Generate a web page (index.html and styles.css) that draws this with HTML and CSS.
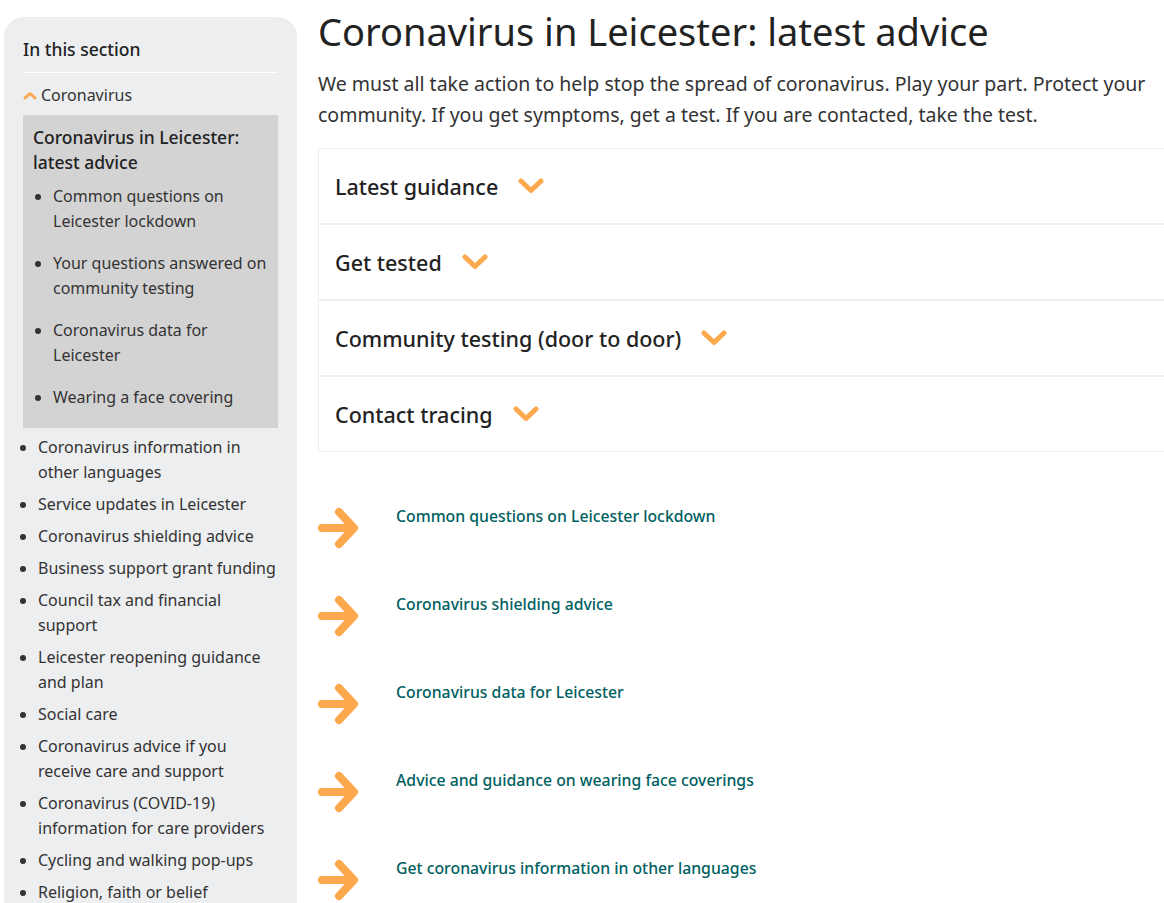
FILE: index.html
```html
<!DOCTYPE html>
<html lang="en">

<head>
    <meta charset="UTF-8">
    <meta name="viewport" content="width=device-width, initial-scale=1.0">
    <title>Coronavirus in Leicester: latest advice</title>
    <link rel="stylesheet" href="styles.css">
</head>

<body>
    <div class="page">
        <aside class="sidebar">
            <h2 class="side-title">In this section</h2>
            <a class="parent" href="#">
                <svg class="up" width="14" height="9" viewBox="0 0 14 9"><path d="M2 7 L7 2.5 L12 7" fill="none" stroke="#fca84c" stroke-width="3" stroke-linecap="round" stroke-linejoin="round"/></svg>
                Coronavirus
            </a>
            <div class="current">
                <h3>Coronavirus in Leicester: latest advice</h3>
                <ul class="sub">
                    <li><a href="#">Common questions on Leicester lockdown</a></li>
                    <li><a href="#">Your questions answered on community testing</a></li>
                    <li><a href="#">Coronavirus data for Leicester</a></li>
                    <li><a href="#">Wearing a face covering</a></li>
                </ul>
            </div>
            <ul class="side-list">
                <li><a href="#">Coronavirus information in other languages</a></li>
                <li><a href="#">Service updates in Leicester</a></li>
                <li><a href="#">Coronavirus shielding advice</a></li>
                <li><a href="#">Business support grant funding</a></li>
                <li><a href="#">Council tax and financial support</a></li>
                <li><a href="#">Leicester reopening guidance and plan</a></li>
                <li><a href="#">Social care</a></li>
                <li><a href="#">Coronavirus advice if you receive care and support</a></li>
                <li><a href="#">Coronavirus (COVID-19) information for care providers</a></li>
                <li><a href="#">Cycling and walking pop-ups</a></li>
                <li><a href="#">Religion, faith or belief</a></li>
            </ul>
        </aside>

        <main class="content">
            <h1>Coronavirus in Leicester: latest advice</h1>
            <p class="intro">We must all take action to help stop the spread of coronavirus. Play your part. Protect your community. If you get symptoms, get a test. If you are contacted, take the test.</p>

            <div class="accordion">
                <div class="acc-row">Latest guidance <span class="chev"></span></div>
                <div class="acc-row">Get tested <span class="chev"></span></div>
                <div class="acc-row">Community testing (door to door) <span class="chev"></span></div>
                <div class="acc-row">Contact tracing <span class="chev"></span></div>
            </div>

            <ul class="links">
                <li><span class="arrow"></span><a href="#">Common questions on Leicester lockdown</a></li>
                <li><span class="arrow"></span><a href="#">Coronavirus shielding advice</a></li>
                <li><span class="arrow"></span><a href="#">Coronavirus data for Leicester</a></li>
                <li><span class="arrow"></span><a href="#">Advice and guidance on wearing face coverings</a></li>
                <li><span class="arrow"></span><a href="#">Get coronavirus information in other languages</a></li>
            </ul>
        </main>
    </div>

    <script>
        // same chevron / arrow svg for every row
        var chev = '<svg width="26" height="16" viewBox="0 0 26 16"><path d="M3 3 L13 12.5 L23 3" fill="none" stroke="#fca84c" stroke-width="5" stroke-linecap="round" stroke-linejoin="round"/></svg>';
        var arrow = '<svg width="40" height="42" viewBox="0 0 40 42"><path d="M4 21 H34 M21 5 L36 21 L21 37" fill="none" stroke="#fca84c" stroke-width="8" stroke-linecap="round" stroke-linejoin="round"/></svg>';
        document.querySelectorAll('.chev').forEach(function (el) { el.innerHTML = chev; });
        document.querySelectorAll('.arrow').forEach(function (el) { el.innerHTML = arrow; });
    </script>
</body>

</html>
```

FILE: styles.css
```css
html {
    overflow: hidden;
}

body {
    font-family: "Noto Sans", "Open Sans", sans-serif;
    margin: 0;
    padding: 0;
    background-color: #fff;
    color: #222;
}

a {
    color: inherit;
    text-decoration: none;
}

.page {
    display: flex;
    align-items: flex-start;
    gap: 21px;
    padding: 17px 0 0 4px;
    width: 1300px;
}

/* sidebar */

.sidebar {
    width: 255px;
    flex: none;
    background-color: #edeef0;
    border-radius: 20px 20px 0 0;
    padding: 20px 19px 40px 19px;
}

.side-title {
    font-size: 17.5px;
    font-weight: 500;
    margin: 0;
    padding-bottom: 10px;
    line-height: 25px;
    border-bottom: 1px solid #fff;
}

.parent {
    display: flex;
    align-items: center;
    gap: 4px;
    font-size: 16px;
    line-height: 24px;
    margin: 10px 0 8px 0;
    color: #333;
}

.current {
    background-color: #d3d3d3;
    padding: 10px 10px 18px 10px;
}

.current h3 {
    font-size: 17.5px;
    font-weight: 500;
    line-height: 25px;
    margin: 0 0 9px 0;
}

.sub {
    margin: 0;
    padding-left: 20px;
    font-size: 16px;
    line-height: 25px;
    color: #333;
}

.sub li {
    margin-bottom: 17px;
}

.sub li:last-child {
    margin-bottom: 0;
}

.side-list {
    margin: 7px 0 0 0;
    padding-left: 15px;
    font-size: 16px;
    line-height: 25px;
    color: #333;
}

.side-list li {
    margin-bottom: 7px;
}

/* main column */

.content {
    flex: none;
    width: 960px;
}

h1 {
    font-size: 38px;
    font-weight: 400;
    line-height: 46px;
    margin: -9px 0 14px 0;
    color: #222;
}

.intro {
    font-size: 19.5px;
    line-height: 31px;
    margin: 0 0 18px 0;
    color: #333;
    max-width: 845px;
}

.accordion {
    border-top: 1px solid #eee;
}

.acc-row {
    display: flex;
    align-items: center;
    gap: 20px;
    height: 74px;
    padding-left: 16px;
    font-size: 21.5px;
    font-weight: 500;
    border: 1px solid #eee;
    border-top: none;
    border-bottom: 2px solid #eee;
}

.acc-row:last-child {
    border-bottom-width: 1px;
}

.chev {
    display: flex;
}

.links {
    list-style: none;
    margin: 52px 0 0 0;
    padding: 0;
}

.links li {
    display: flex;
    align-items: flex-start;
    gap: 38px;
    height: 88px;
}

.arrow {
    display: flex;
    margin-top: 3px;
}

.links a {
    color: #00605f;
    font-size: 15.8px;
    font-weight: 500;
    line-height: 24px;
}
```
